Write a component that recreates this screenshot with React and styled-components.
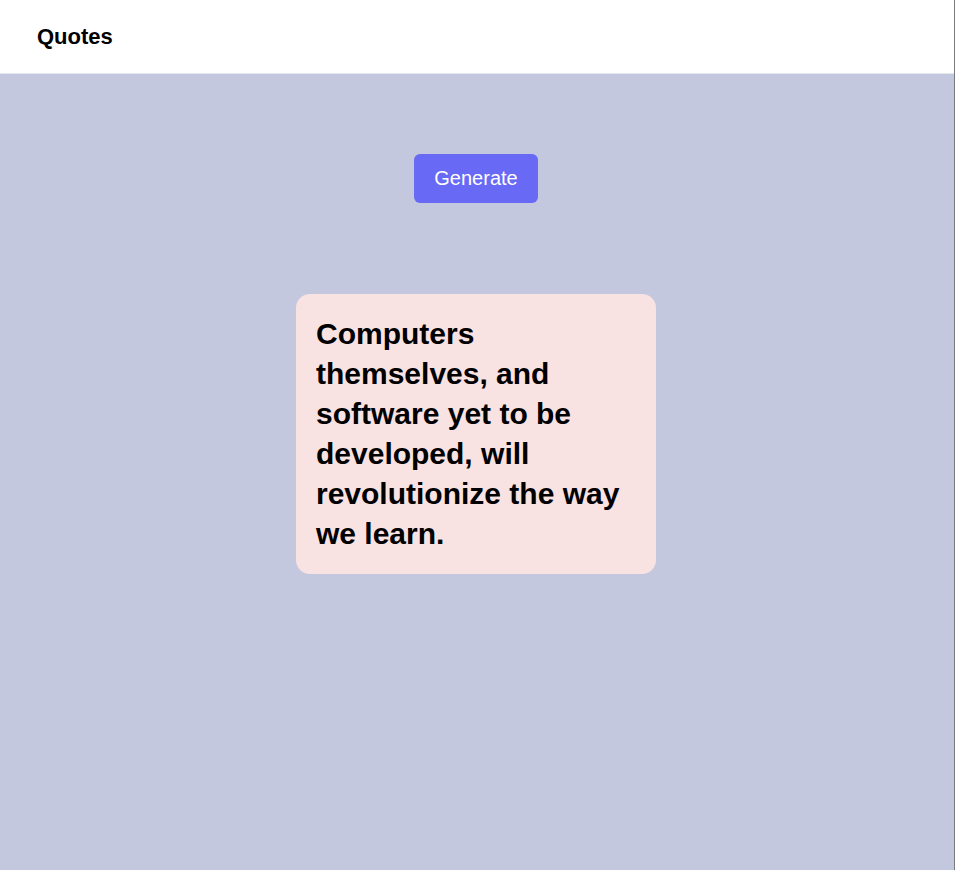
import React from 'react';
import styled, { createGlobalStyle } from 'styled-components';

const GlobalStyle = createGlobalStyle`
  html, body {
    margin: 0;
    padding: 0;
  }
  body {
    font-family: "Liberation Sans", Arial, sans-serif;
  }
`;

const Page = styled.div`
  display: flex;
  flex-direction: column;
  min-height: 100vh;
  border-right: 1px solid #7a7a7a;
  background-color: #c4c8df;
`;

const Header = styled.header`
  display: flex;
  align-items: center;
  height: 73px;
  padding: 0 37px;
  background-color: #fff;
  border-bottom: 1px solid #e4e6ee;
`;

const Title = styled.h1`
  margin: 0;
  font-size: 22px;
  font-weight: 700;
  color: #000;
`;

const Main = styled.main`
  flex: 1;
  display: flex;
  flex-direction: column;
  align-items: center;
  padding: 80px 2px 0 0;
  gap: 91px;
`;

const GenerateButton = styled.button`
  height: 49px;
  padding: 0 20px;
  font-family: inherit;
  font-size: 20px;
  color: #fff;
  background-color: #6869f5;
  border: none;
  border-radius: 6px;
  cursor: pointer;
`;

const QuoteCard = styled.div`
  width: 320px;
  padding: 20px;
  background-color: #f8e2e2;
  border-radius: 14px;
  font-size: 30px;
  font-weight: 700;
  line-height: 40px;
  color: #000;
`;

const App = () => {
  const [quote] = React.useState(
    'Computers themselves, and software yet to be developed, will revolutionize the way we learn.'
  );

  return (
    <Page>
      <GlobalStyle />
      <Header>
        <Title>Quotes</Title>
      </Header>
      <Main>
        <GenerateButton>Generate</GenerateButton>
        <QuoteCard>{quote}</QuoteCard>
      </Main>
    </Page>
  );
};

export default App;
